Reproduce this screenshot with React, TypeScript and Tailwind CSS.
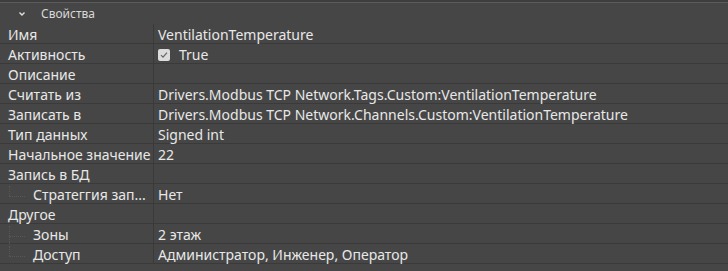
import { ReactNode } from 'react';

type Row = {
  label: string;
  value?: ReactNode;
  child?: 'mid' | 'last';
};

const rows: Row[] = [
  { label: 'Имя', value: 'VentilationTemperature' },
  {
    label: 'Активность',
    value: (
      <span className="flex items-center gap-[9px]">
        <span className="w-[12px] h-[12px] rounded-[2px] bg-[#dcdcdc] flex items-center justify-center">
          <svg width="10" height="10" viewBox="0 0 10 10">
            <path d="M2 5.2 L4 7.2 L8 2.6" fill="none" stroke="#666" strokeWidth="1.2" />
          </svg>
        </span>
        True
      </span>
    ),
  },
  { label: 'Описание' },
  { label: 'Считать из', value: 'Drivers.Modbus TCP Network.Tags.Custom:VentilationTemperature' },
  { label: 'Записать в', value: 'Drivers.Modbus TCP Network.Channels.Custom:VentilationTemperature' },
  { label: 'Тип данных', value: 'Signed int' },
  { label: 'Начальное значение', value: '22' },
  { label: 'Запись в БД' },
  { label: 'Стратеггия зап...', value: 'Нет', child: 'last' },
  { label: 'Другое' },
  { label: 'Зоны', value: '2 этаж', child: 'mid' },
  { label: 'Доступ', value: 'Администратор, Инженер, Оператор', child: 'last' },
];

function TreeLine({ kind }: { kind: 'mid' | 'last' }) {
  return (
    <span className="relative w-[24px] self-stretch shrink-0 ml-[9px]">
      <span
        className={
          kind === 'mid'
            ? 'absolute left-0 top-0 bottom-[-1px] border-l border-dotted border-[#575757]'
            : 'absolute left-0 top-0 h-[10px] border-l border-dotted border-[#575757]'
        }
      />
      <span className="absolute left-0 top-[10px] w-[16px] border-t border-dotted border-[#575757]" />
    </span>
  );
}

export default function App() {
  return (
    <div
      className="w-[728px] h-[271px] bg-[#464646] text-[#e8e8e8] text-[14px] overflow-hidden"
      style={{ fontFamily: '"Noto Sans", sans-serif' }}
    >
      <div className="h-[2px] bg-[#3e3e3e]" />
      <div className="h-[1px] bg-[#5c5c5c]" />
      <div className="h-[21px] flex items-center text-[12px] text-[#d8d8d8]">
        <svg width="8" height="6" viewBox="0 0 8 6" className="ml-[18px] mr-[15px]">
          <path d="M1.5 1.5 L4 4 L6.5 1.5" fill="none" stroke="#e0e0e0" strokeWidth="1.4" />
        </svg>
        Свойства
      </div>
      {rows.map((r) => (
        <div key={r.label} className="grid grid-cols-[154px_1fr] h-[20px] border-b border-[#3a3a3a]">
          <div className="flex items-center border-r border-[#3a3a3a] leading-none pt-[2px]">
            {r.child ? <TreeLine kind={r.child} /> : <span className="w-[8px]" />}
            <span className="whitespace-nowrap">{r.label}</span>
          </div>
          <div className="flex items-center pl-[4px] whitespace-nowrap leading-none pt-[2px]">{r.value}</div>
        </div>
      ))}
    </div>
  );
}
